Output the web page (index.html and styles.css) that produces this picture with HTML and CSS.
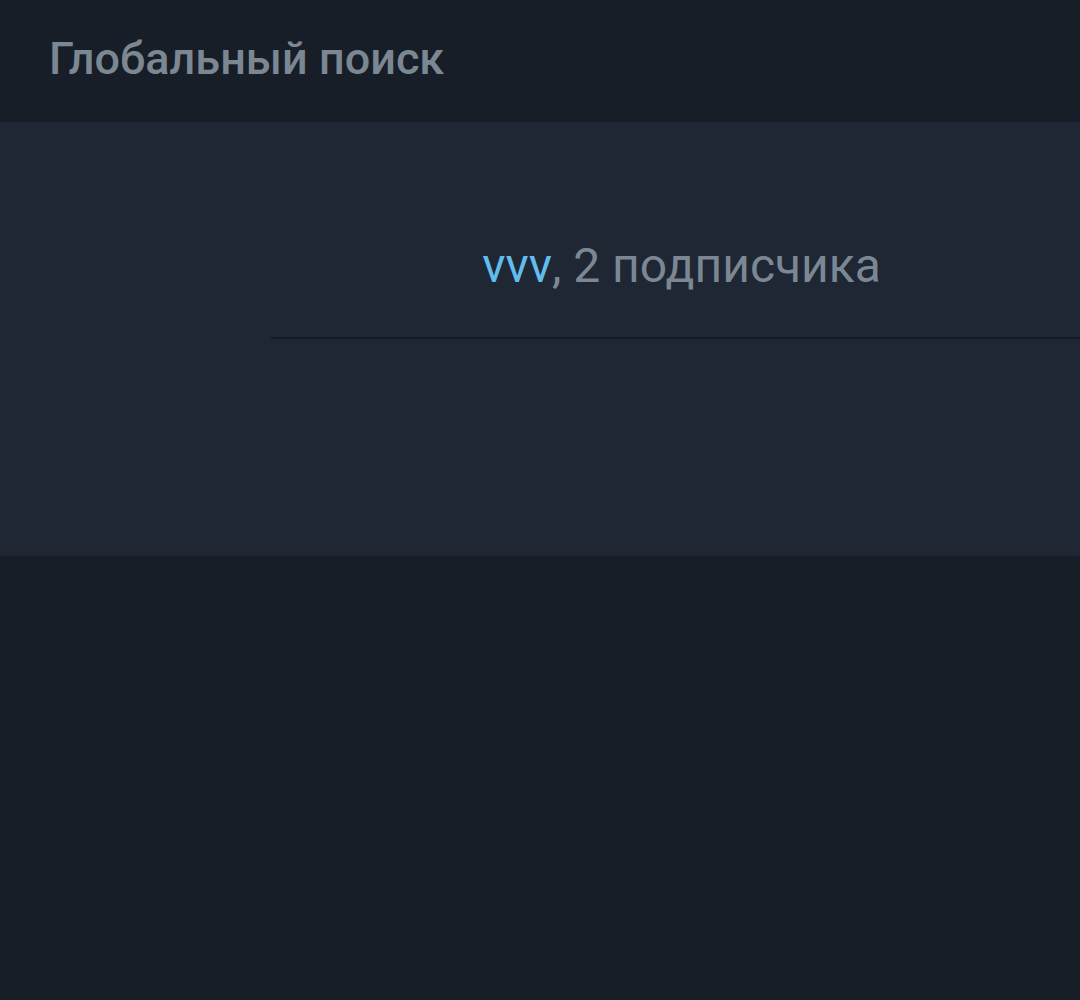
FILE: index.html
```html
<!DOCTYPE html>
<html lang="ru">
<head>
    <meta charset="UTF-8">
    <meta name="viewport" content="width=device-width, initial-scale=1.0">
    <title>Глобальный поиск</title>
    <link rel="stylesheet" href="styles.css">
</head>
<body>
    <div class="header">
        <div class="title">Глобальный поиск</div>
    </div>
    <div class="results">
        <div class="result">
            <span class="name">vvv</span>, 2 подписчика
        </div>
    </div>
</body>
</html>
```

FILE: styles.css
```css
body {
    margin: 0;
    background-color: #171e27;
    font-family: Roboto, "Noto Sans", sans-serif;
    height: 1000px;
}
.header {
    height: 122px;
    padding-left: 49px;
    display: flex;
    align-items: center;
}
.title {
    color: #7b8893;
    font-size: 45px;
    font-weight: 500;
    margin-top: -6px;
}
.results {
    background-color: #1e2733;
    height: 434px;
}
.result {
    margin-left: 271px;
    height: 217px;
    display: flex;
    align-items: flex-start;
    justify-content: center;
    padding-top: 115px;
    padding-left: 12px;
    border-bottom: 2px solid #141b24;
    color: #7b8893;
    font-size: 48px;
    line-height: normal;
    box-sizing: border-box;
}
.result .name {
    color: #63bcee;
}
```
